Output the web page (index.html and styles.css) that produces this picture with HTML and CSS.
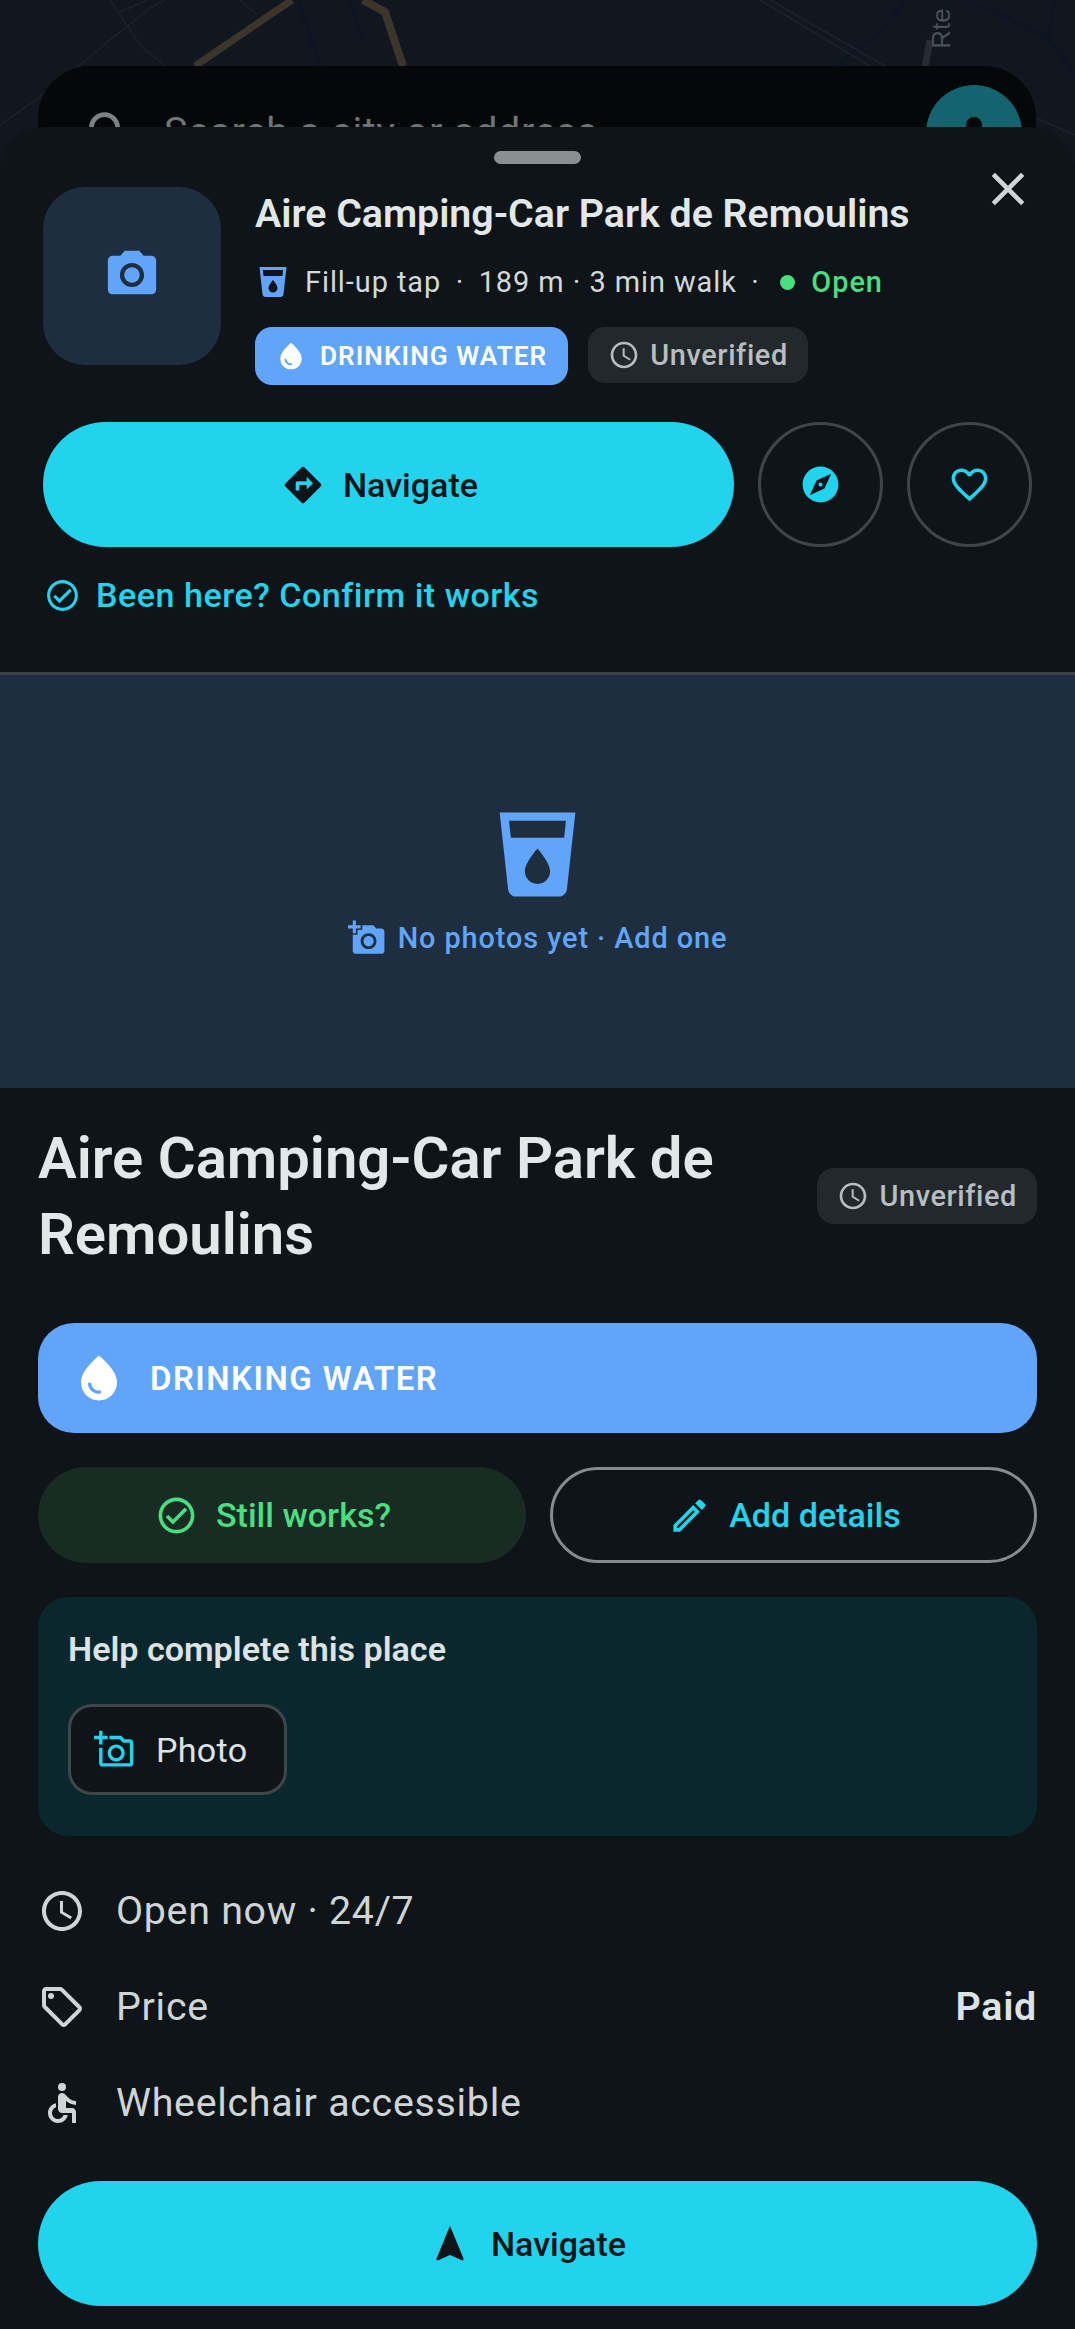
FILE: index.html
```html
<!DOCTYPE html>
<html lang="en">
<head>
    <meta charset="UTF-8">
    <meta name="viewport" content="width=device-width, initial-scale=1.0">
    <title>Aire Camping-Car Park de Remoulins</title>
    <link rel="stylesheet" href="styles.css">
</head>
<body>
    <div class="map">
        <svg class="map-lines" viewBox="0 0 1075 220" width="1075" height="220" fill="none">
            <path d="M0 125 L50 90 L110 40 L150 8 L165 0" stroke="#1a1f28" stroke-width="2"/>
            <path d="M110 0 L140 45 L165 66" stroke="#1a1f29" stroke-width="2"/>
            <path d="M120 12 L148 0" stroke="#1a1f29" stroke-width="2"/>
            <path d="M240 0 L256 14" stroke="#1a1f29" stroke-width="2"/>
            <path d="M298 0 L320 66" stroke="#0e1522" stroke-width="4"/>
            <path d="M195 66 L292 0" stroke="#3b352c" stroke-width="7"/>
            <path d="M363 0 L385 12 L403 66" stroke="#3b352c" stroke-width="8"/>
            <path d="M350 0 L362 40" stroke="#0e1522" stroke-width="3"/>
            <path d="M686 75 C720 82 790 90 830 70 C860 50 890 25 905 0" stroke="#0e1522" stroke-width="4"/>
            <path d="M770 0 L885 66" stroke="#1c212a" stroke-width="2"/>
            <path d="M760 0 L870 66" stroke="#1c212a" stroke-width="2"/>
            <path d="M930 40 L925 66" stroke="#272c34" stroke-width="7"/>
            <path d="M965 0 C1000 15 1030 25 1050 40 L1075 75" stroke="#0e1522" stroke-width="4"/>
            <path d="M1055 0 L1048 38" stroke="#0e1522" stroke-width="3"/>
            <path d="M1036 118 L1075 135" stroke="#1c212a" stroke-width="2"/>
        </svg>
        <div class="map-label">Rte</div>
        <div class="search-bar">
            <svg class="search-icon" viewBox="0 0 24 24"><path d="M15.5 14h-.79l-.28-.27C15.41 12.59 16 11.11 16 9.5 16 5.91 13.09 3 9.5 3S3 5.91 3 9.5 5.91 16 9.5 16c1.61 0 3.09-.59 4.23-1.57l.27.28v.79l5 4.99L20.49 19l-4.99-5zm-6 0C7.01 14 5 11.99 5 9.5S7.01 5 9.5 5 14 7.01 14 9.5 11.99 14 9.5 14z"/></svg>
            <span class="search-text">Search a city or address</span>
            <div class="avatar"><span class="avatar-dot"></span></div>
        </div>
    </div>

    <div class="sheet">
        <div class="handle"></div>
        <button class="close">
            <svg viewBox="0 0 24 24"><path d="M19 6.41L17.59 5 12 10.59 6.41 5 5 6.41 10.59 12 5 17.59 6.41 19 12 13.41 17.59 19 19 17.59 13.41 12z"/></svg>
        </button>

        <div class="head">
            <div class="thumb">
                <svg viewBox="0 0 24 24"><path fill-rule="evenodd" d="M9 2L7.17 4H4c-1.1 0-2 .9-2 2v12c0 1.1.9 2 2 2h16c1.1 0 2-.9 2-2V6c0-1.1-.9-2-2-2h-3.17L15 2H9zm3 15c-2.76 0-5-2.24-5-5s2.24-5 5-5 5 2.24 5 5-2.24 5-5 5z"/><circle cx="12" cy="12" r="3.2"/></svg>
            </div>
            <div class="head-info">
                <h2 class="head-title">Aire Camping-Car Park de Remoulins</h2>
                <div class="meta">
                    <svg class="meta-icon" viewBox="0 0 24 24"><path d="M3 2l2.01 18.23C5.13 21.23 5.97 22 7 22h10c1.03 0 1.87-.77 1.99-1.77L21 2H3zm9 17c-1.66 0-3-1.34-3-3 0-2 3-5.4 3-5.4s3 3.4 3 5.4c0 1.66-1.34 3-3 3zm6.33-11H5.67l-.44-4h13.53l-.43 4z"/></svg>
                    <span>Fill-up tap</span>
                    <span class="sep">·</span>
                    <span>189 m · 3 min walk</span>
                    <span class="sep">·</span>
                    <span class="open-dot"></span>
                    <span class="open-text">Open</span>
                </div>
                <div class="chips">
                    <span class="chip chip-water">
                        <svg viewBox="0 0 24 24"><path d="M12 2c-5.33 4.55-8 8.48-8 11.8 0 4.98 3.8 8.2 8 8.2s8-3.22 8-8.2c0-3.32-2.67-7.25-8-11.8zM7.83 14c.37 0 .67.26.74.62.41 2.22 2.28 2.98 3.64 2.87.43-.02.79.32.79.75 0 .4-.32.73-.72.75-2.13.13-4.62-1.09-5.19-4.12-.08-.45.28-.87.74-.87z"/></svg>
                        DRINKING WATER
                    </span>
                    <span class="chip chip-status">
                        <svg viewBox="0 0 24 24"><path d="M11.99 2C6.47 2 2 6.48 2 12s4.47 10 9.99 10C17.52 22 22 17.52 22 12S17.52 2 11.99 2zM12 20c-4.42 0-8-3.58-8-8s3.58-8 8-8 8 3.58 8 8-3.58 8-8 8zm.5-13H11v6l5.25 3.15.75-1.23-4.5-2.67z"/></svg>
                        Unverified
                    </span>
                </div>
            </div>
        </div>

        <div class="actions">
            <button class="nav-btn">
                <svg viewBox="0 0 24 24"><path d="M21.71 11.29l-9-9c-.39-.39-1.02-.39-1.41 0l-9 9c-.39.39-.39 1.02 0 1.41l9 9c.39.39 1.02.39 1.41 0l9-9c.39-.38.39-1.01 0-1.41zM14 14.5V12h-4v3H8v-4c0-.55.45-1 1-1h5V7.5l3.5 3.5-3.5 3.5z"/></svg>
                Navigate
            </button>
            <button class="round-btn">
                <svg viewBox="0 0 24 24"><path d="M12 10.9c-.61 0-1.1.49-1.1 1.1s.49 1.1 1.1 1.1c.61 0 1.1-.49 1.1-1.1s-.49-1.1-1.1-1.1zM12 2C6.48 2 2 6.48 2 12s4.48 10 10 10 10-4.48 10-10S17.52 2 12 2zm2.19 12.19L6 18l3.81-8.19L18 6l-3.81 8.19z"/></svg>
            </button>
            <button class="round-btn">
                <svg viewBox="0 0 24 24"><path d="M16.5 3c-1.74 0-3.41.81-4.5 2.09C10.91 3.81 9.24 3 7.5 3 4.42 3 2 5.42 2 8.5c0 3.78 3.4 6.86 8.55 11.54L12 21.35l1.45-1.32C18.6 15.36 22 12.28 22 8.5 22 5.42 19.58 3 16.5 3zm-4.4 15.55l-.1.1-.1-.1C7.14 14.24 4 11.39 4 8.5 4 6.5 5.5 5 7.5 5c1.54 0 3.04.99 3.57 2.36h1.87C13.46 5.99 14.96 5 16.5 5c2 0 3.5 1.5 3.5 3.5 0 2.89-3.14 5.74-7.9 10.05z"/></svg>
            </button>
        </div>

        <div class="confirm">
            <svg viewBox="0 0 24 24"><path d="M12 2C6.48 2 2 6.48 2 12s4.48 10 10 10 10-4.48 10-10S17.52 2 12 2zm0 18c-4.41 0-8-3.59-8-8s3.59-8 8-8 8 3.59 8 8-3.59 8-8 8zm4.59-12.42L10 14.17l-2.59-2.58L6 13l4 4 8-8z"/></svg>
            Been here? Confirm it works
        </div>

        <div class="photo">
            <svg class="photo-glass" viewBox="0 0 24 24"><path d="M3 2l2.01 18.23C5.13 21.23 5.97 22 7 22h10c1.03 0 1.87-.77 1.99-1.77L21 2H3zm9 17c-1.66 0-3-1.34-3-3 0-2 3-5.4 3-5.4s3 3.4 3 5.4c0 1.66-1.34 3-3 3zm6.33-11H5.67l-.44-4h13.53l-.43 4z"/></svg>
            <div class="photo-add">
                <svg viewBox="0 0 24 24"><path d="M3 4V1h2v3h3v2H5v3H3V6H0V4h3zm3 6V7h3V4h7l1.83 2H21c1.1 0 2 .9 2 2v12c0 1.1-.9 2-2 2H5c-1.1 0-2-.9-2-2V10h3zm7 9c2.76 0 5-2.24 5-5s-2.24-5-5-5-5 2.24-5 5 2.24 5 5 5zm-3.2-5c0 1.77 1.43 3.2 3.2 3.2s3.2-1.43 3.2-3.2-1.43-3.2-3.2-3.2-3.2 1.43-3.2 3.2z"/></svg>
                No photos yet · Add one
            </div>
        </div>

        <div class="detail">
            <div class="detail-head">
                <h1 class="detail-title">Aire Camping-Car Park de Remoulins</h1>
                <span class="chip chip-status">
                    <svg viewBox="0 0 24 24"><path d="M11.99 2C6.47 2 2 6.48 2 12s4.47 10 9.99 10C17.52 22 22 17.52 22 12S17.52 2 11.99 2zM12 20c-4.42 0-8-3.58-8-8s3.58-8 8-8 8 3.58 8 8-3.58 8-8 8zm.5-13H11v6l5.25 3.15.75-1.23-4.5-2.67z"/></svg>
                    Unverified
                </span>
            </div>

            <div class="type-bar">
                <svg viewBox="0 0 24 24"><path d="M12 2c-5.33 4.55-8 8.48-8 11.8 0 4.98 3.8 8.2 8 8.2s8-3.22 8-8.2c0-3.32-2.67-7.25-8-11.8zM7.83 14c.37 0 .67.26.74.62.41 2.22 2.28 2.98 3.64 2.87.43-.02.79.32.79.75 0 .4-.32.73-.72.75-2.13.13-4.62-1.09-5.19-4.12-.08-.45.28-.87.74-.87z"/></svg>
                DRINKING WATER
            </div>

            <div class="two-btns">
                <button class="pill pill-green">
                    <svg viewBox="0 0 24 24"><path d="M12 2C6.48 2 2 6.48 2 12s4.48 10 10 10 10-4.48 10-10S17.52 2 12 2zm0 18c-4.41 0-8-3.59-8-8s3.59-8 8-8 8 3.59 8 8-3.59 8-8 8zm4.59-12.42L10 14.17l-2.59-2.58L6 13l4 4 8-8z"/></svg>
                    Still works?
                </button>
                <button class="pill pill-outline">
                    <svg viewBox="0 0 24 24"><path d="M14.06 9.02l.92.92L5.92 19H5v-.92l9.06-9.06M17.66 3c-.25 0-.51.1-.7.29l-1.83 1.83 3.75 3.75 1.83-1.83c.39-.39.39-1.02 0-1.41l-2.34-2.34c-.2-.2-.45-.29-.71-.29zm-3.6 3.19L3 17.25V21h3.75L17.81 9.94l-3.75-3.75z"/></svg>
                    Add details
                </button>
            </div>

            <div class="help">
                <div class="help-title">Help complete this place</div>
                <button class="help-chip">
                    <svg viewBox="0 0 24 24"><path d="M21 6h-3.17L16 4H9v2h6.12l1.83 2H21v12H5v-9H3v9c0 1.1.9 2 2 2h16c1.1 0 2-.9 2-2V8c0-1.1-.9-2-2-2zM8 14c0 2.76 2.24 5 5 5s5-2.24 5-5-2.24-5-5-5-5 2.24-5 5zm5-3c1.65 0 3 1.35 3 3s-1.35 3-3 3-3-1.35-3-3 1.35-3 3-3zM5 9V6h3V4H5V1H3v3H0v2h3v3z"/></svg>
                    Photo
                </button>
            </div>

            <div class="rows">
                <div class="row">
                    <svg viewBox="0 0 24 24"><path d="M11.99 2C6.47 2 2 6.48 2 12s4.47 10 9.99 10C17.52 22 22 17.52 22 12S17.52 2 11.99 2zM12 20c-4.42 0-8-3.58-8-8s3.58-8 8-8 8 3.58 8 8-3.58 8-8 8zm.5-13H11v6l5.25 3.15.75-1.23-4.5-2.67z"/></svg>
                    <span class="row-label">Open now · 24/7</span>
                </div>
                <div class="row">
                    <svg viewBox="0 0 24 24"><path d="M21.41 11.41l-8.83-8.83c-.37-.37-.88-.58-1.41-.58H4c-1.1 0-2 .9-2 2v7.17c0 .53.21 1.04.59 1.41l8.83 8.83c.78.78 2.05.78 2.83 0l7.17-7.17c.78-.78.78-2.04-.01-2.83zM12.83 20L4 11.17V4h7.17L20 12.83 12.83 20z"/><circle cx="6.5" cy="6.5" r="1.5"/></svg>
                    <span class="row-label">Price</span>
                    <span class="row-value">Paid</span>
                </div>
                <div class="row">
                    <svg viewBox="0 0 24 24"><circle cx="12" cy="4" r="2"/><path d="M19 13v-2c-1.54.02-3.09-.75-4.07-1.83l-1.29-1.43c-.17-.19-.38-.34-.61-.45-.01 0-.01-.01-.02-.01H13c-.35-.2-.75-.3-1.19-.26C10.76 7.11 10 8.04 10 9.09V15c0 1.1.9 2 2 2h5v5h2v-5.5c0-1.1-.9-2-2-2h-3v-3.45c1.29 1.07 3.25 1.94 5 1.95zm-6.17 5c-.41 1.16-1.52 2-2.83 2-1.66 0-3-1.34-3-3 0-1.31.84-2.41 2-2.83V12.1c-2.28.46-4 2.48-4 4.9 0 2.76 2.24 5 5 5 2.42 0 4.44-1.72 4.9-4h-2.07z"/></svg>
                    <span class="row-label">Wheelchair accessible</span>
                </div>
            </div>

            <button class="nav-btn nav-wide">
                <svg viewBox="0 0 24 24"><path d="M12 2L4.5 20.29l.71.71L12 18l6.79 3 .71-.71z"/></svg>
                Navigate
            </button>
        </div>
    </div>
</body>
</html>
```

FILE: styles.css
```css
* {
    box-sizing: border-box;
}
body {
    margin: 0;
    width: 1075px;
    height: 2329px;
    overflow: hidden;
    background-color: #11161f;
    font-family: Roboto, "Liberation Sans", sans-serif;
    color: #e2e8ea;
}
button {
    font-family: inherit;
    border: none;
    padding: 0;
    cursor: pointer;
}
h1, h2 {
    margin: 0;
}

/* map behind the sheet */
.map {
    position: absolute;
    top: 0;
    left: 0;
    width: 1075px;
    height: 220px;
    overflow: hidden;
}
.map-lines {
    position: absolute;
    top: 0;
    left: 0;
}
.map-label {
    position: absolute;
    top: 13px;
    left: 921px;
    font-family: "Liberation Sans", sans-serif;
    font-size: 26px;
    color: #4c5058;
    transform: rotate(-90deg);
}
.search-bar {
    position: absolute;
    top: 66px;
    left: 38px;
    width: 998px;
    height: 134px;
    padding: 0 14px 0 44px;
    border-radius: 52px;
    background-color: #050808;
    display: flex;
    align-items: center;
}
.search-icon {
    width: 57px;
    height: 57px;
    margin-right: 25px;
    fill: #7c8183;
}
.search-text {
    flex: 1;
    font-size: 39.4px;
    letter-spacing: 0.6px;
    margin-top: -4px;
    color: #6f7476;
}
.avatar {
    width: 96px;
    height: 96px;
    border-radius: 50%;
    background-color: #14646f;
    display: flex;
    justify-content: center;
    padding-top: 32px;
}
.avatar-dot {
    width: 16px;
    height: 16px;
    border-radius: 50%;
    background-color: #050808;
}

/* sheet */
.sheet {
    position: relative;
    margin-top: 127px;
    height: 2202px;
    border-radius: 46px 46px 0 0;
    background-color: #0e1417;
    overflow: hidden;
}
.handle {
    width: 87px;
    height: 13px;
    margin: 24px auto 0;
    border-radius: 7px;
    background-color: #8a9092;
}
.close {
    position: absolute;
    top: 34px;
    left: 980px;
    width: 56px;
    height: 56px;
    background: none;
}
.close svg {
    display: block;
    width: 56px;
    height: 56px;
    fill: #cfd5d6;
}

.head {
    display: flex;
    gap: 34px;
    margin-top: 23px;
    padding-left: 43px;
}
.thumb {
    flex: none;
    width: 178px;
    height: 178px;
    border-radius: 42px;
    background-color: #1e2e3e;
    display: flex;
    align-items: center;
    justify-content: center;
}
.thumb svg {
    width: 58px;
    height: 58px;
    margin-bottom: 2px;
    fill: #60a5fa;
}
.head-title {
    font-size: 39.3px;
    line-height: 54px;
    font-weight: 600;
    color: #e2e8ea;
}
.meta {
    display: flex;
    align-items: center;
    height: 36px;
    margin-top: 23px;
    font-size: 28.9px;
    letter-spacing: 0.95px;
    color: #d3d9da;
}
.meta-icon {
    width: 36px;
    height: 36px;
    margin-right: 14px;
    fill: #60a5fa;
}
.sep {
    margin: 0 14.5px;
}
.open-dot {
    width: 15px;
    height: 15px;
    margin: 0 16px 0 6px;
    border-radius: 50%;
    background-color: #4ade80;
}
.open-text {
    color: #4ade80;
    font-weight: 500;
}
.chips {
    display: flex;
    align-items: flex-start;
    gap: 20px;
    margin-top: 27px;
}
.chip {
    display: inline-flex;
    align-items: center;
    border-radius: 17px;
    font-weight: 600;
}
.chip svg {
    flex: none;
}
.chip-water {
    height: 58px;
    padding: 0 21px 0 20px;
    gap: 13px;
    background-color: #60a5fa;
    color: #fff;
    font-size: 26.2px;
    letter-spacing: 1.05px;
}
.chip-water svg {
    width: 32px;
    height: 32px;
    fill: #fff;
}
.chip-status {
    height: 56px;
    padding: 0 20px;
    gap: 10px;
    background-color: #22282b;
    color: #b8bec0;
    font-size: 28.9px;
    font-weight: 500;
    letter-spacing: 0.6px;
}
.chip-status svg {
    width: 32px;
    height: 32px;
    fill: #b8bec0;
}

.actions {
    display: flex;
    gap: 24px;
    margin-top: 37px;
    padding-left: 43px;
}
.nav-btn {
    display: flex;
    align-items: center;
    justify-content: center;
    gap: 18px;
    width: 691px;
    height: 125px;
    padding-right: 18px;
    border-radius: 63px;
    background-color: #22d3ee;
    color: #0e1417;
    font-size: 34.1px;
    font-weight: 500;
}
.nav-btn svg {
    width: 44px;
    height: 44px;
    fill: #0e1417;
}
.round-btn {
    width: 125px;
    height: 125px;
    border-radius: 50%;
    border: 3px solid #3f4649;
    background: none;
    display: flex;
    align-items: center;
    justify-content: center;
}
.round-btn svg {
    width: 43px;
    height: 43px;
    fill: #22d3ee;
}
.confirm {
    display: flex;
    align-items: center;
    gap: 15px;
    height: 44px;
    margin-top: 26px;
    padding-left: 44px;
    color: #22d3ee;
    font-size: 34.1px;
    font-weight: 500;
    letter-spacing: 0.5px;
}
.confirm svg {
    width: 37px;
    height: 37px;
    fill: #22d3ee;
}

.photo {
    height: 416px;
    margin-top: 55px;
    border-top: 3px solid #3b4346;
    background-color: #1e2e3e;
    display: flex;
    flex-direction: column;
    align-items: center;
    padding-top: 129px;
}
.photo-glass {
    width: 101px;
    height: 101px;
    fill: #60a5fa;
}
.photo-add {
    display: flex;
    align-items: center;
    gap: 12px;
    margin-top: 14px;
    color: #60a5fa;
    font-size: 28.9px;
    font-weight: 500;
    letter-spacing: 0.9px;
}
.photo-add svg {
    width: 38px;
    height: 38px;
    fill: #60a5fa;
}

.detail {
    padding: 32px 38px 0;
}
.detail-head {
    display: flex;
    align-items: center;
    justify-content: space-between;
}
.detail-title {
    width: 740px;
    font-size: 58px;
    line-height: 76px;
    font-weight: 600;
    color: #e2e8ea;
}
.type-bar {
    display: flex;
    align-items: center;
    gap: 24px;
    height: 110px;
    margin-top: 51px;
    padding-left: 34px;
    border-radius: 36px;
    background-color: #60a5fa;
    color: #fff;
    font-size: 33px;
    font-weight: 600;
    letter-spacing: 1.45px;
}
.type-bar svg {
    width: 54px;
    height: 54px;
    fill: #fff;
}
.two-btns {
    display: flex;
    gap: 24px;
    margin-top: 34px;
}
.pill {
    display: flex;
    align-items: center;
    justify-content: center;
    gap: 18px;
    height: 96px;
    padding-right: 18px;
    border-radius: 48px;
    font-size: 34.1px;
    font-weight: 500;
}
.pill svg {
    width: 43px;
    height: 43px;
}
.pill-green {
    width: 488px;
    background-color: #182c24;
    color: #4ade80;
}
.pill-green svg {
    fill: #4ade80;
}
.pill-outline {
    flex: 1;
    background: none;
    border: 3px solid #868c8e;
    color: #22d3ee;
}
.pill-outline svg {
    fill: #22d3ee;
}
.help {
    height: 239px;
    margin-top: 34px;
    padding: 32px 30px 0;
    border-radius: 30px;
    background-color: #0b272e;
}
.help-title {
    font-size: 34.1px;
    line-height: 40px;
    font-weight: 600;
    color: #dde3e5;
}
.help-chip {
    display: flex;
    align-items: center;
    gap: 21px;
    width: 219px;
    height: 91px;
    margin-top: 35px;
    padding-left: 23px;
    border: 3px solid #3f4649;
    border-radius: 24px;
    background-color: #0e1417;
    color: #dde3e5;
    font-size: 34.1px;
    letter-spacing: 0.3px;
}
.help-chip svg {
    width: 41px;
    height: 41px;
    fill: #22d3ee;
}
.rows {
    margin-top: 27px;
}
.row {
    display: flex;
    align-items: center;
    height: 96px;
    font-size: 39.4px;
    letter-spacing: 0.7px;
    color: #cfd5d6;
}
.row svg {
    flex: none;
    width: 48px;
    height: 48px;
    margin-right: 30px;
    fill: #cfd5d6;
}
.row-label {
    flex: 1;
    margin-top: -1px;
}
.row-value {
    margin-top: -1px;
    font-weight: 600;
    color: #dde3e5;
}
.nav-wide {
    width: 100%;
    margin-top: 30px;
    padding-right: 21px;
    gap: 19px;
}
```
